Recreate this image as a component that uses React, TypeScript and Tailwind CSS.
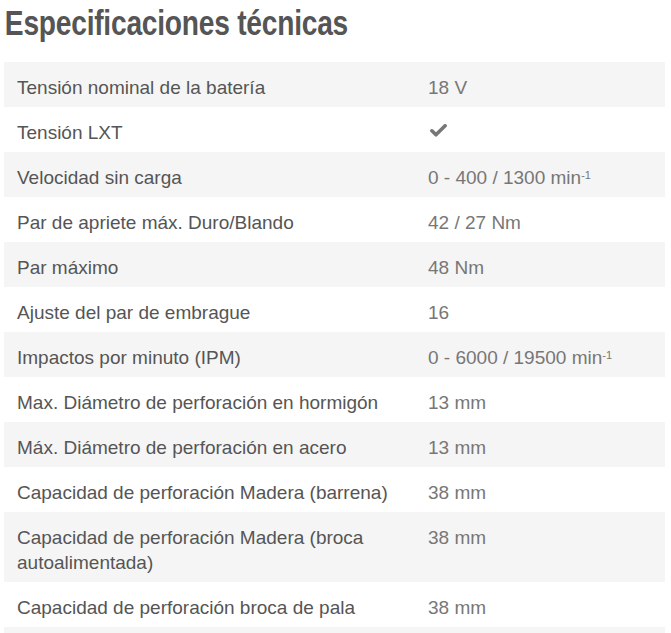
import React from "react";

type Spec = { label: string; value: React.ReactNode };

const Check = () => (
  <svg width="17" height="13" viewBox="0 0 16 12" className="ml-[2px] mt-[4px]">
    <path d="M1.8 6.3 L5.6 10 L14.2 1.6" fill="none" stroke="#777" strokeWidth="3.4" strokeLinecap="round" strokeLinejoin="round" />
  </svg>
);

const specs: Spec[] = [
  { label: "Tensión nominal de la batería", value: "18 V" },
  { label: "Tensión LXT", value: <Check /> },
  { label: "Velocidad sin carga", value: <>0 - 400 / 1300 min<sup className="text-[11px]">-1</sup></> },
  { label: "Par de apriete máx. Duro/Blando", value: "42 / 27 Nm" },
  { label: "Par máximo", value: "48 Nm" },
  { label: "Ajuste del par de embrague", value: "16" },
  { label: "Impactos por minuto (IPM)", value: <>0 - 6000 / 19500 min<sup className="text-[11px]">-1</sup></> },
  { label: "Max. Diámetro de perforación en hormigón", value: "13 mm" },
  { label: "Máx. Diámetro de perforación en acero", value: "13 mm" },
  { label: "Capacidad de perforación Madera (barrena)", value: "38 mm" },
  { label: "Capacidad de perforación Madera (broca autoalimentada)", value: "38 mm" },
  { label: "Capacidad de perforación broca de pala", value: "38 mm" },
  { label: "\u00a0", value: "" },
];

export default function App() {
  return (
    <div className="h-[633px] overflow-hidden bg-white font-['Liberation_Sans',Arial,sans-serif]">
      <h2 className="origin-left scale-x-[0.805] whitespace-nowrap pl-[6px] pt-[1px] text-[35px] font-bold leading-[44px] tracking-[-0.3px] text-[#555]">
        Especificaciones técnicas
      </h2>
      <div className="mt-[17px] ml-[4px] w-[661px]">
        {specs.map((s, i) => (
          <div key={i} className={`flex pt-[13px] pb-[7px] text-[19px] leading-[25px] ${i % 2 === 0 ? "bg-[#f5f5f5]" : "bg-white"}`}>
            <div className="w-[424px] shrink-0 pl-[13px] pr-[28px] text-[#555]">{s.label}</div>
            <div className="text-[#777]">{s.value}</div>
          </div>
        ))}
      </div>
    </div>
  );
}
